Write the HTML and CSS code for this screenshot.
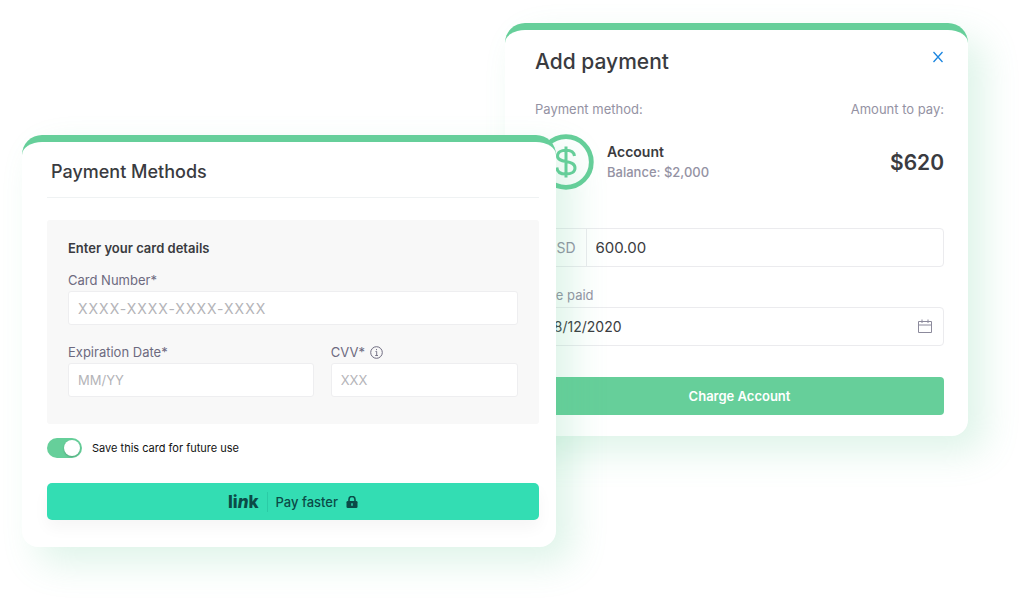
FILE: index.html
```
<!DOCTYPE html>
<html lang="en">
<head>
	<meta charset="utf-8">
	<title>Payment Methods</title>
	<link rel="stylesheet" href="styles.css">
</head>
<body>
	<main class="stage">
		<section class="card card-payment">
			<div class="card-head">
				<h2 class="card-title">Add payment</h2>
				<button class="close-btn" type="button" aria-label="Close">
					<svg width="12" height="12" viewBox="0 0 12 12"><path d="M1.5 1L10.5 11M10.5 1L1.5 11" fill="none" stroke="#1b86e0" stroke-width="1.3"/></svg>
				</button>
			</div>
			<div class="caption-row">
				<span>Payment method:</span>
				<span>Amount to pay:</span>
			</div>
			<div class="account">
				<svg class="coin" width="56" height="56" viewBox="0 0 56 56">
					<circle cx="28" cy="28" r="25.3" fill="none" stroke="#66cf9a" stroke-width="4.8"/>
					<path d="M28 12.5V43.5M36.5 22C36 18 32.5 16.2 28 16.2C23 16.2 19.5 18.3 19.5 22C19.5 30 37 25 37 34C37 38 33 40.1 28 40.1C23 40.1 19.2 38 18.8 33.5" fill="none" stroke="#66cf9a" stroke-width="3"/>
				</svg>
				<div class="account-info">
					<strong>Account</strong>
					<span>Balance: $2,000</span>
				</div>
				<div class="amount">$620</div>
			</div>
			<div class="field money">
				<label class="currency" for="amount">USD</label>
				<input class="field-input" id="amount" type="text" value="600.00">
			</div>
			<label class="date-label" for="date">Date paid</label>
			<div class="field date">
				<input class="field-input" id="date" type="text" value="08/12/2020">
				<svg width="14" height="15" viewBox="0 0 14 15"><path d="M.5 2.5H13.5V13.5H.5ZM.5 6H13.5M4 .5V4M10 .5V4" fill="none" stroke="#8c8a9c"/></svg>
			</div>
			<button class="charge-btn" type="button">Charge Account</button>
		</section>

		<section class="card card-methods">
			<h2 class="methods-title">Payment Methods</h2>
			<div class="details">
				<h3 class="details-title">Enter your card details</h3>
				<label class="label" for="number">Card Number*</label>
				<input class="input input-number" id="number" type="text" placeholder="XXXX-XXXX-XXXX-XXXX">
				<div class="details-row">
					<div class="col-date">
						<label class="label" for="expiry">Expiration Date*</label>
						<input class="input" id="expiry" type="text" placeholder="MM/YY">
					</div>
					<div class="col-cvv">
						<label class="label" for="cvv">CVV*
							<svg width="13" height="13" viewBox="0 0 13 13"><circle cx="6.5" cy="6.5" r="5.8" fill="none" stroke="#6d6a7f"/><path d="M5.5 5.5H6.7V9.5M5.2 9.5H8M6.5 3V4.2" fill="none" stroke="#6d6a7f" stroke-width=".9"/></svg>
						</label>
						<input class="input" id="cvv" type="text" placeholder="XXX">
					</div>
				</div>
			</div>
			<label class="save">
				<input class="toggle" type="checkbox" checked>
				<span>Save this card for future use</span>
			</label>
			<button class="link-btn" type="button">
				<span class="link-logo">li<i>n</i>k</span>
				<span class="link-text">Pay faster</span>
				<svg width="12" height="12" viewBox="0 0 12 12"><path d="M3 6V3.5a3 3 0 0 1 6 0V6" fill="none" stroke="#0b4a47" stroke-width="1.6"/><rect x=".5" y="5" width="11" height="7" rx="1.3" fill="#0b4a47"/><path d="M6 7.3V9.7" stroke="#33ddb3" stroke-width="1.4"/></svg>
			</button>
		</section>
	</main>
</body>
</html>
```
FILE: styles.css
```
*{
	box-sizing: border-box;
}
body{
	margin: 0;
	background: #fff;
	color: #3a3b40;
	font-family: Inter, "Liberation Sans", sans-serif;
	font-size: 13px;
}
h2, h3{
	margin: 0;
	font-weight: 500;
}
button{
	border: none;
	padding: 0;
	font-family: inherit;
	cursor: pointer;
}
input{
	min-width: 0;
	margin: 0;
	font-family: inherit;
	outline: none;
}
/* the two cards share the narrow middle column */
.stage{
	display: grid;
	grid-template-columns: 483fr 51fr 412fr;
	align-items: start;
	padding: 23px 60px 56px 22px;
}
.card{
	grid-row: 1;
	border-top: 7px solid #66cf9a;
	border-radius: 20px 20px 16px 16px;
	background: #fff;
	box-shadow: 16px 16px 36px rgba(90, 200, 145, .2);
}
.card-payment{
	grid-column: 2 / 4;
	padding: 16px 24px 21px 30px;
}
.card-methods{
	grid-column: 1 / 3;
	z-index: 1;
	margin-top: 112px;
	padding: 12px 17px 27px 25px;
}

.card-head{
	display: flex;
	justify-content: space-between;
	align-items: flex-start;
}
.card-title{
	font-size: 21px;
	line-height: 32px;
}
.close-btn{
	display: flex;
	padding: 5px 0;
	background: none;
}
.caption-row{
	display: flex;
	justify-content: space-between;
	margin-top: 21px;
	line-height: 20px;
	color: #9492a3;
}
.account{
	display: flex;
	align-items: center;
	margin-top: 15px;
	padding-left: 3px;
}
.account-info{
	flex: 1;
	display: flex;
	flex-direction: column;
	margin-left: 13px;
	line-height: 20px;
	font-weight: 500;
	color: #9492a3;
}
.account-info strong{
	font-size: 14px;
	font-weight: 600;
	color: #3a3b40;
}
.amount{
	font-size: 21px;
	font-weight: 600;
}
.field{
	display: flex;
	align-items: center;
	height: 39px;
	border: 1px solid #ebebee;
	border-radius: 4px;
}
.money{
	margin-top: 38px;
}
.currency{
	align-self: stretch;
	padding: 0 10px;
	border-right: 1px solid #ebebee;
	font-size: 14px;
	line-height: 38px;
	color: #9492a3;
}
.field-input{
	flex: 1;
	height: 100%;
	border: none;
	padding: 0 9px;
	background: none;
	font-size: 14px;
	color: #3a3b40;
}
.money .field-input{
	font-size: 15px;
}
.date-label{
	display: block;
	margin-top: 17px;
	line-height: 22px;
	color: #9492a3;
}
.date{
	margin-top: 1px;
	padding-right: 11px;
}
.charge-btn{
	display: block;
	width: 100%;
	height: 38px;
	margin-top: 31px;
	border-radius: 4px;
	background: #66cf9a;
	color: #fff;
	font-size: 13px;
	font-weight: 600;
}

.methods-title{
	padding: 0 4px 7px;
	border-bottom: 1px solid #eff2f3;
	font-size: 18px;
	line-height: 36px;
}
.details{
	margin-top: 22px;
	padding: 18px 21px 27px;
	border-radius: 3px;
	background: #f8f8f8;
}
.details-title{
	font-size: 13px;
	font-weight: 600;
	line-height: 20px;
}
.label{
	display: flex;
	align-items: center;
	gap: 5px;
	line-height: 22px;
	color: #6d6a7f;
}
.details-title + .label{
	margin-top: 11px;
}
.input{
	display: block;
	width: 100%;
	height: 34px;
	border: 1px solid #eeeef0;
	border-radius: 3px;
	padding: 0 9px;
	background: #fff;
	font-size: 13px;
}
.input::placeholder{
	color: #b4b4b8;
}
.input-number{
	font-size: 14px;
	letter-spacing: 1px;
}
.details-row{
	display: flex;
	gap: 17px;
	margin-top: 16px;
}
.col-date{
	flex: 21;
}
.col-cvv{
	flex: 16;
}
.save{
	display: flex;
	align-items: center;
	gap: 10px;
	margin-top: 14px;
	font-size: 11px;
	color: #111;
}
.toggle{
	appearance: none;
	display: flex;
	justify-content: flex-end;
	width: 35px;
	height: 20px;
	padding: 2px;
	border-radius: 10px;
	background: #66cf9a;
}
.toggle::before{
	content: "";
	width: 16px;
	height: 16px;
	border-radius: 50%;
	background: #fff;
	box-shadow: 0 1px 2px rgba(0, 0, 0, .2);
}
.toggle:not(:checked){
	justify-content: flex-start;
	background: #ccc;
}
.link-btn{
	display: flex;
	justify-content: center;
	align-items: center;
	gap: 8px;
	width: 100%;
	height: 37px;
	margin-top: 25px;
	border-radius: 5px;
	background: #33ddb3;
	box-shadow: 0 8px 16px rgba(0, 0, 0, .04);
	color: #0b4a47;
}
.link-logo{
	padding-right: 8px;
	border-right: 1px solid #2bcba6;
	font-size: 17px;
	font-weight: 800;
	line-height: 20px;
}
.link-text{
	font-size: 13px;
	font-weight: 500;
}
```
